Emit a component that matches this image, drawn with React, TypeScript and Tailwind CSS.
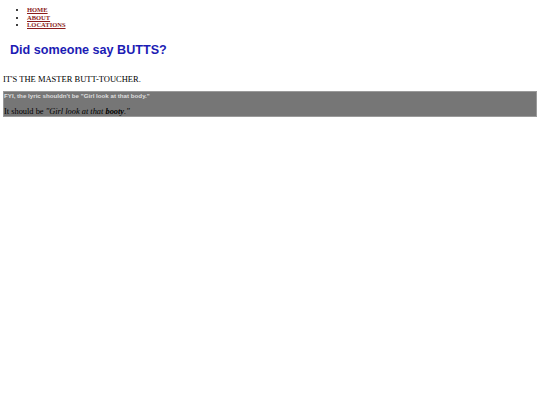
import React from 'react'

const links = ['HOME', 'ABOUT', 'LOCATIONS']

export default function App() {
  return (
    <div className="w-[540px] h-[405px] bg-white overflow-hidden font-['Liberation_Serif',serif] text-black">
      {/* Nav */}
      <ul className="list-disc pl-[27px] pt-[6px] text-[6.5px] leading-[7.6px]">
        {links.map((l) => (
          <li key={l}>
            <a href="#" className="font-bold text-[#8b1c1c] underline decoration-[0.5px]">{l}</a>
          </li>
        ))}
      </ul>

      <h1 className="mt-[14px] ml-[10px] font-['Liberation_Sans',sans-serif] font-bold text-[12.6px] leading-[15px] text-[#1c1cb4]">
        Did someone say BUTTS?
      </h1>

      <p className="mt-[16px] ml-[3px] text-[8.5px] leading-[10px]">IT'S THE MASTER BUTT-TOUCHER.</p>

      <div className="mt-[7px] mx-[3px] h-[26px] bg-[#767676] border border-[#9a9a9a]">
        <p className="font-['Liberation_Sans',sans-serif] font-bold text-[6.2px] leading-[7px] text-[#dedede]">
          FYI, the lyric shouldn't be "Girl look at that body."
        </p>
        <p className="mt-[9px] text-[8.4px] leading-[8px] text-black">
          It should be <i>"Girl look at that <b>booty</b>."</i>
        </p>
      </div>
    </div>
  )
}
